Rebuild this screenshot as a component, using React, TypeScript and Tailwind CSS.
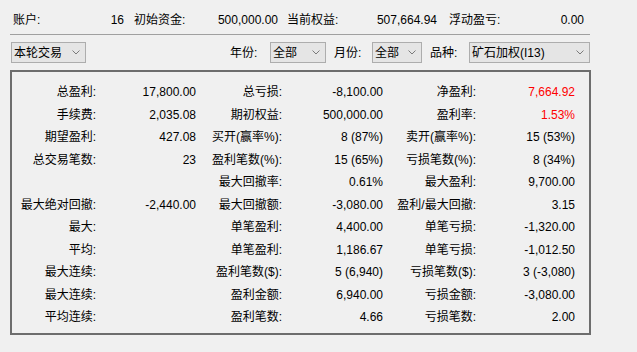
import React from "react";

type Cell = { label: string; value: string; red?: boolean };

const rows: (Cell | null)[][] = [
  [
    { label: "总盈利:", value: "17,800.00" },
    { label: "总亏损:", value: "-8,100.00" },
    { label: "净盈利:", value: "7,664.92", red: true },
  ],
  [
    { label: "手续费:", value: "2,035.08" },
    { label: "期初权益:", value: "500,000.00" },
    { label: "盈利率:", value: "1.53%", red: true },
  ],
  [
    { label: "期望盈利:", value: "427.08" },
    { label: "买开(赢率%):", value: "8 (87%)" },
    { label: "卖开(赢率%):", value: "15 (53%)" },
  ],
  [
    { label: "总交易笔数:", value: "23" },
    { label: "盈利笔数(%):", value: "15 (65%)" },
    { label: "亏损笔数(%):", value: "8 (34%)" },
  ],
  [
    null,
    { label: "最大回撤率:", value: "0.61%" },
    { label: "最大盈利:", value: "9,700.00" },
  ],
  [
    { label: "最大绝对回撤:", value: "-2,440.00" },
    { label: "最大回撤额:", value: "-3,080.00" },
    { label: "盈利/最大回撤:", value: "3.15" },
  ],
  [
    { label: "最大:", value: "" },
    { label: "单笔盈利:", value: "4,400.00" },
    { label: "单笔亏损:", value: "-1,320.00" },
  ],
  [
    { label: "平均:", value: "" },
    { label: "单笔盈利:", value: "1,186.67" },
    { label: "单笔亏损:", value: "-1,012.50" },
  ],
  [
    { label: "最大连续:", value: "" },
    { label: "盈利笔数($):", value: "5 (6,940)" },
    { label: "亏损笔数($):", value: "3 (-3,080)" },
  ],
  [
    { label: "最大连续:", value: "" },
    { label: "盈利金额:", value: "6,940.00" },
    { label: "亏损金额:", value: "-3,080.00" },
  ],
  [
    { label: "平均连续:", value: "" },
    { label: "盈利笔数:", value: "4.66" },
    { label: "亏损笔数:", value: "2.00" },
  ],
];

const colWidths = [
  ["w-[84px]", "w-[100px]"],
  ["w-[86px]", "w-[101px]"],
  ["w-[93px]", "w-[99px]"],
];

function Chevron() {
  return (
    <svg width="8" height="5" viewBox="0 0 8 5" className="shrink-0">
      <path d="M0.5 0.5 L4 4 L7.5 0.5" fill="none" stroke="#7a7a7a" strokeWidth="1" />
    </svg>
  );
}

function Combo({ text, width }: { text: string; width: string }) {
  return (
    <div
      className={`${width} h-[21px] flex items-center justify-between pl-[2px] pr-[5px] bg-[#e5e5e5] border border-[#adadad]`}
    >
      <span>{text}</span>
      <Chevron />
    </div>
  );
}

function Info({ label, value, width }: { label: string; value: string; width: string }) {
  return (
    <div className={`${width} flex justify-between`}>
      <span>{label}</span>
      <span>{value}</span>
    </div>
  );
}

export default function App() {
  return (
    <div
      className="w-[637px] h-[352px] bg-[#f0f0f0] text-[12px] text-black overflow-hidden"
      style={{ fontFamily: '"Liberation Sans", "Noto Sans CJK SC", sans-serif' }}
    >
      <div className="flex h-[34px] items-center pl-[13px] pt-[6px] leading-none">
        <Info label="账户:" value="16" width="w-[111px]" />
        <div className="w-[10px]" />
        <Info label="初始资金:" value="500,000.00" width="w-[144px]" />
        <div className="w-[9px]" />
        <Info label="当前权益:" value="507,664.94" width="w-[150px]" />
        <div className="w-[12px]" />
        <Info label="浮动盈亏:" value="0.00" width="w-[135px]" />
      </div>
      <div className="ml-[10px] w-[580px] border-t border-[#a0a0a0]" />

      <div className="flex items-center mt-[7px] pl-[11px] leading-none">
        <Combo text="本轮交易" width="w-[75px]" />
        <span className="ml-[144px] w-[40px]">年份:</span>
        <Combo text="全部" width="w-[56px]" />
        <span className="ml-[8px] w-[38px]">月份:</span>
        <Combo text="全部" width="w-[50px]" />
        <span className="ml-[8px] w-[39px]">品种:</span>
        <Combo text="矿石加权(I13)" width="w-[121px]" />
      </div>

      <div className="ml-[10px] mt-[7px] w-[581px] h-[265px] border-2 border-[#6d6d6d] pt-[9px]">
        {rows.map((row, i) => (
          <div key={i} className="flex h-[22.5px] items-center">
            {row.map((cell, j) => (
              <React.Fragment key={j}>
                <div className={`${colWidths[j][0]} text-right whitespace-nowrap`}>
                  {cell?.label ?? ""}
                </div>
                <div
                  className={`${colWidths[j][1]} text-right whitespace-nowrap ${
                    cell?.red ? "text-[#ff0000]" : ""
                  }`}
                >
                  {cell?.value ?? ""}
                </div>
              </React.Fragment>
            ))}
          </div>
        ))}
      </div>
    </div>
  );
}
